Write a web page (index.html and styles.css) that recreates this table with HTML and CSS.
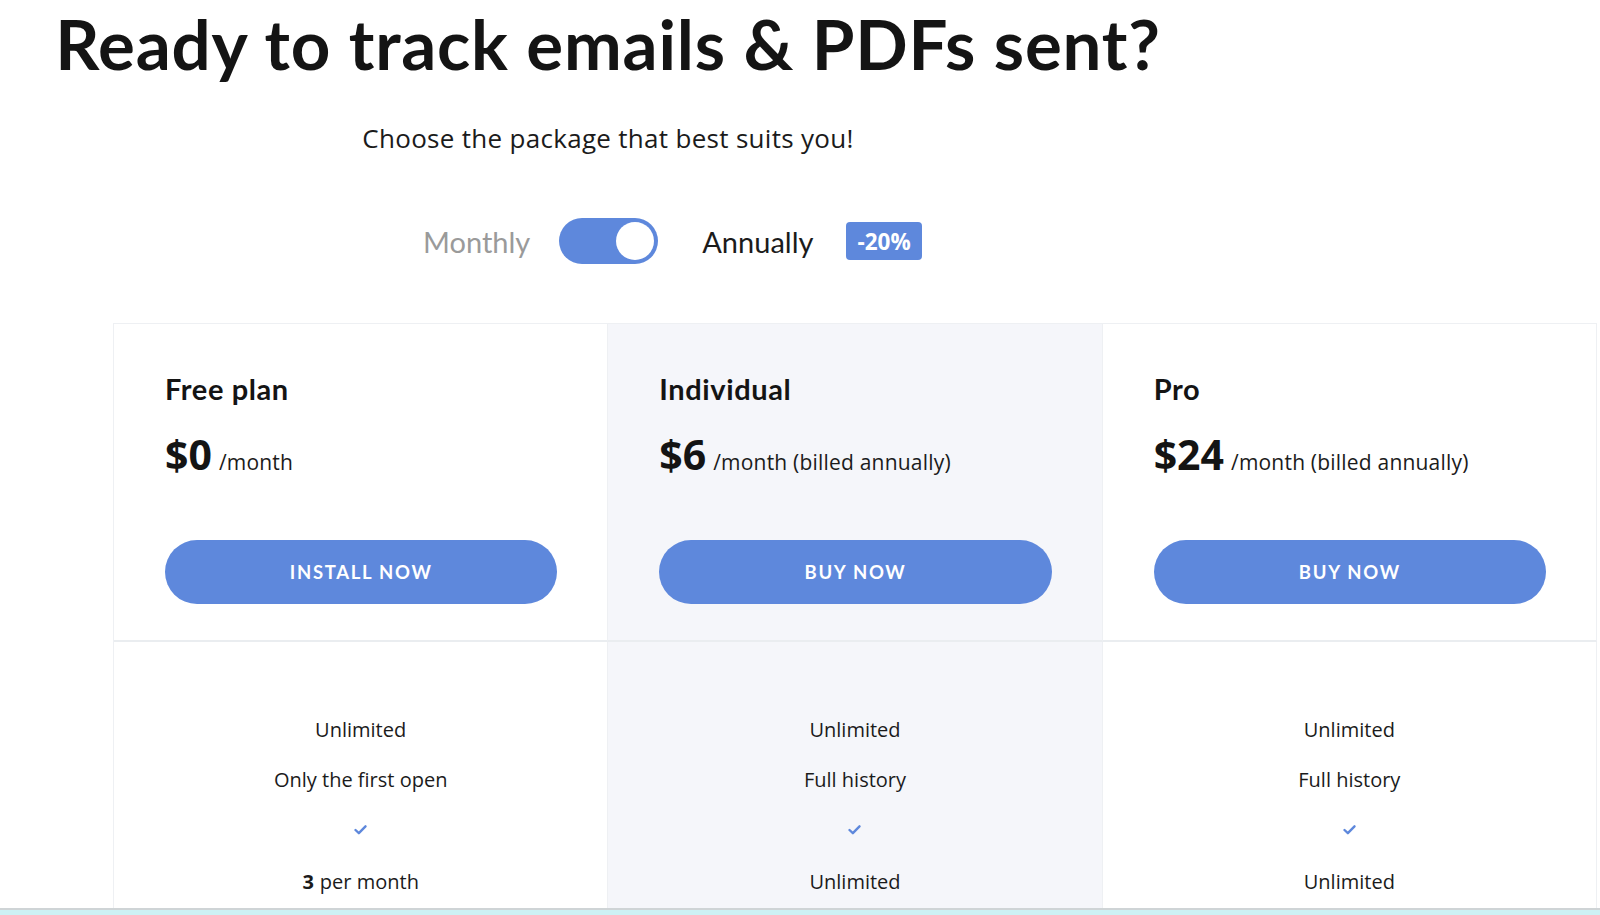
FILE: index.html
```html
<!DOCTYPE html>
<html lang="en">
<head>
<meta charset="utf-8">
<title>Pricing</title>
<link rel="stylesheet" href="styles.css">
</head>
<body>
  <header class="hero">
    <h1 class="hero-title">Ready to track emails &amp; PDFs sent?</h1>
    <p class="hero-subtitle">Choose the package that best suits you!</p>
    <div class="billing">
      <span class="billing-label billing-label--muted">Monthly</span>
      <span class="switch"><span class="switch-knob"></span></span>
      <span class="billing-label">Annually</span>
      <span class="badge">-20%</span>
    </div>
  </header>

  <section class="pricing">
    <div class="plan-head">
      <h2 class="plan-name">Free plan</h2>
      <div class="plan-price"><span class="price-amount">$0</span><span class="price-period">/month</span></div>
      <a class="plan-button" href="#">INSTALL NOW</a>
    </div>
    <div class="plan-head plan-head--featured">
      <h2 class="plan-name">Individual</h2>
      <div class="plan-price"><span class="price-amount">$6</span><span class="price-period">/month (billed annually)</span></div>
      <a class="plan-button" href="#">BUY NOW</a>
    </div>
    <div class="plan-head">
      <h2 class="plan-name">Pro</h2>
      <div class="plan-price"><span class="price-amount">$24</span><span class="price-period">/month (billed annually)</span></div>
      <a class="plan-button" href="#">BUY NOW</a>
    </div>

    <ul class="plan-features">
      <li class="feature">Unlimited</li>
      <li class="feature">Only the first open</li>
      <li class="feature"><svg class="check" viewBox="0 0 14 11" width="13" height="10"><path d="M1.5 5.5 L5.2 9 L12.5 1.5" fill="none" stroke="#5e88dc" stroke-width="2.6" stroke-linecap="round" stroke-linejoin="round"/></svg></li>
      <li class="feature"><b>3</b> per month</li>
    </ul>
    <ul class="plan-features plan-features--featured">
      <li class="feature">Unlimited</li>
      <li class="feature">Full history</li>
      <li class="feature"><svg class="check" viewBox="0 0 14 11" width="13" height="10"><path d="M1.5 5.5 L5.2 9 L12.5 1.5" fill="none" stroke="#5e88dc" stroke-width="2.6" stroke-linecap="round" stroke-linejoin="round"/></svg></li>
      <li class="feature">Unlimited</li>
    </ul>
    <ul class="plan-features">
      <li class="feature">Unlimited</li>
      <li class="feature">Full history</li>
      <li class="feature"><svg class="check" viewBox="0 0 14 11" width="13" height="10"><path d="M1.5 5.5 L5.2 9 L12.5 1.5" fill="none" stroke="#5e88dc" stroke-width="2.6" stroke-linecap="round" stroke-linejoin="round"/></svg></li>
      <li class="feature">Unlimited</li>
    </ul>
  </section>

  <div class="bottom-bar"></div>
</body>
</html>
```

FILE: styles.css
```css
* { box-sizing: border-box; }

html, body {
  margin: 0;
  padding: 0;
  background: #ffffff;
  color: #1b1b1b;
  font-family: "Lato", "Open Sans", sans-serif;
  overflow: hidden;
}

.hero {
  width: 1216px;
  display: flex;
  flex-direction: column;
  align-items: center;
}

.hero-title {
  margin: 0;
  padding-top: 4px;
  font-family: "Lato", sans-serif;
  font-weight: 700;
  font-size: 69px;
  line-height: 80px;
  color: #141414;
  letter-spacing: 0.8px;
}

.hero-subtitle {
  margin: 38px 0 0;
  font-family: "Open Sans", sans-serif;
  font-size: 26px;
  line-height: 32px;
  color: #1b1b1b;
  letter-spacing: 0.3px;
}

.billing {
  align-self: flex-start;
  margin: 64px 0 0 423px;
  display: flex;
  align-items: center;
  height: 46px;
}

.billing-label {
  font-family: "Lato", sans-serif;
  font-size: 29px;
  color: #1b1b1b;
}

.billing-label--muted {
  color: #9a9a9a;
  margin-right: 29px;
}

.switch {
  width: 99px;
  height: 46px;
  border-radius: 23px;
  background: #5e88dc;
  display: flex;
  align-items: center;
  justify-content: flex-end;
  padding-right: 4px;
  margin-right: 44px;
}

.switch-knob {
  width: 38px;
  height: 38px;
  border-radius: 50%;
  background: #ffffff;
}

.badge {
  margin-left: 33px;
  height: 38px;
  padding: 0 11px;
  display: flex;
  align-items: center;
  border-radius: 4px;
  background: #5e88dc;
  color: #ffffff;
  font-family: "Open Sans", sans-serif;
  font-weight: 700;
  font-size: 22.5px;
}

.pricing {
  margin: 59px 0 0 113px;
  width: 1484px;
  display: grid;
  grid-template-columns: repeat(3, 1fr);
  grid-template-rows: 318px auto;
  border-top: 1px solid #eef0f3;
  border-left: 1px solid #eef0f3;
}

.plan-head {
  display: flex;
  flex-direction: column;
  padding: 48px 50px 0 51px;
  border-right: 1px solid #eef0f3;
  border-bottom: 2px solid #eaedf0;
}

.plan-head--featured,
.plan-features--featured {
  background: #f5f6fa;
}

.plan-name {
  margin: 0;
  font-family: "Lato", sans-serif;
  font-weight: 700;
  font-size: 29px;
  line-height: 34px;
  letter-spacing: 0.6px;
  color: #141414;
}

.plan-price {
  margin-top: 20px;
  display: flex;
  align-items: baseline;
}

.price-amount {
  font-family: "Open Sans", sans-serif;
  font-weight: 700;
  font-size: 41px;
  color: #141414;
}

.price-period {
  margin-left: 7px;
  font-family: "Open Sans", sans-serif;
  font-size: 21px;
  letter-spacing: 0.2px;
  color: #1b1b1b;
}

.plan-button {
  margin-top: 58px;
  height: 64px;
  border-radius: 32px;
  background: #5e88dc;
  color: #ffffff;
  text-decoration: none;
  display: flex;
  align-items: center;
  justify-content: center;
  font-family: "Lato", sans-serif;
  font-weight: 700;
  font-size: 18.5px;
  letter-spacing: 1.7px;
}

.plan-features {
  list-style: none;
  margin: 0;
  padding: 62px 0 40px;
  border-right: 1px solid #eef0f3;
}

.feature {
  height: 50.6px;
  display: flex;
  align-items: center;
  justify-content: center;
  font-family: "Open Sans", sans-serif;
  font-size: 20px;
  color: #1b1b1b;
}

.feature b {
  font-weight: 700;
  margin-right: 6px;
}

.check {
  display: block;
}

.bottom-bar {
  position: fixed;
  left: 0;
  right: 0;
  bottom: 0;
  height: 7px;
  border-top: 2px solid #cfd4d6;
  background: #cdf1f4;
}
```
